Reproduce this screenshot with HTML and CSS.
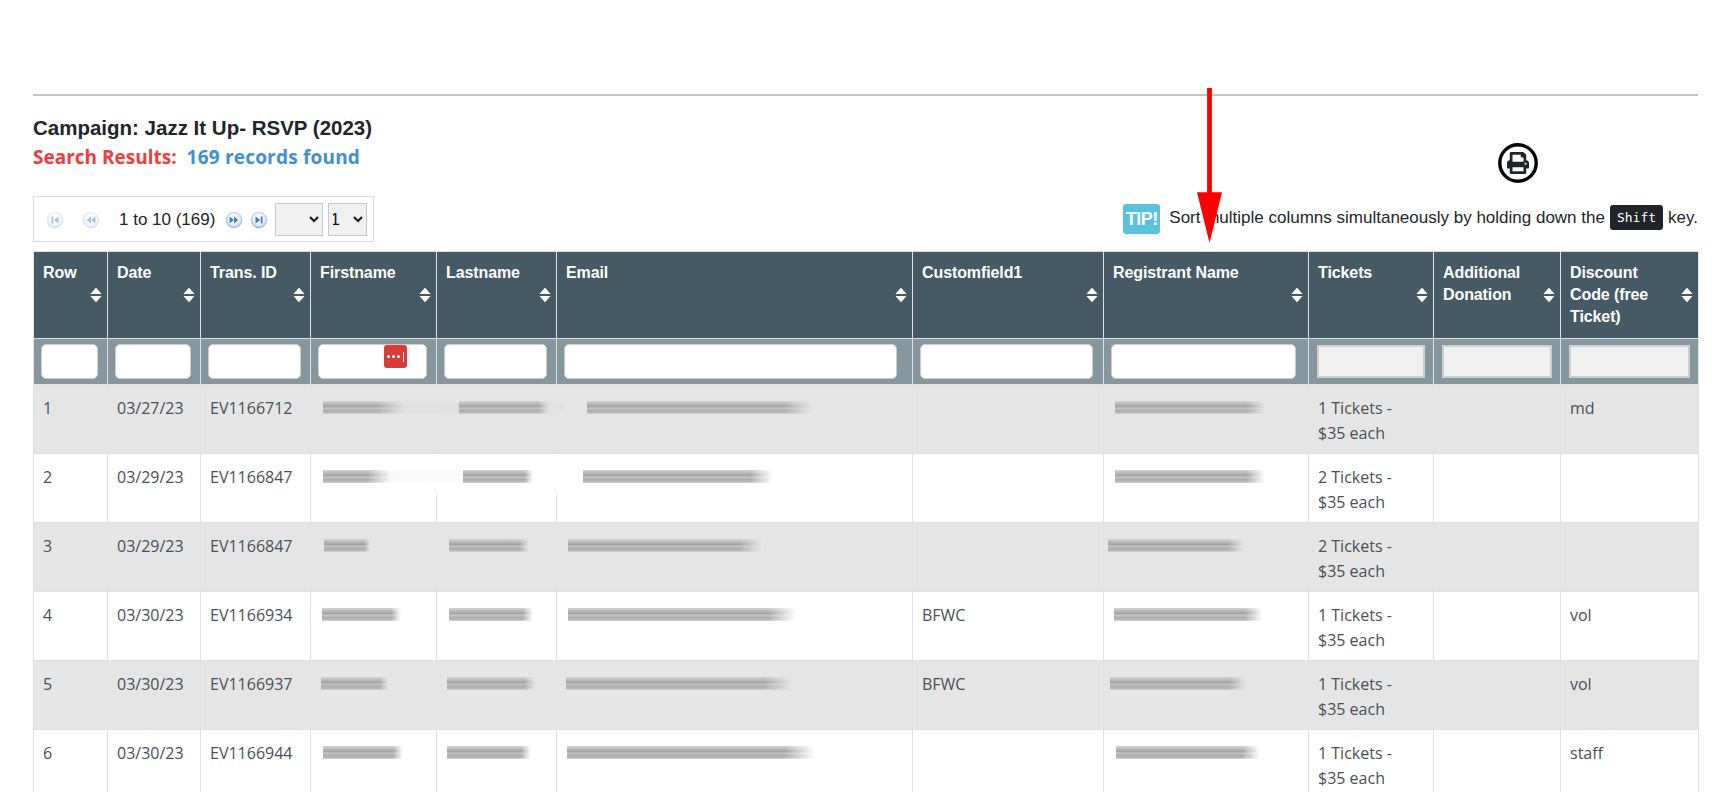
FILE: index.html
```html
<!DOCTYPE html>
<html lang="en">
<head>
<meta charset="utf-8">
<title>Campaign Search Results</title>
<link rel="stylesheet" href="styles.css">
</head>
<body>
<svg class="defs" width="0" height="0" aria-hidden="true">
  <symbol id="sort" viewBox="0 0 12 16"><path d="M6 .8 11.2 6.6a.3.3 0 0 1-.2.5H1a.3.3 0 0 1-.2-.5zM1 8.9h10a.3.3 0 0 1 .2.5L6 15.2.8 9.4A.3.3 0 0 1 1 8.9z" fill="#fff"/></symbol>
  <radialGradient id="ball" cx="50%" cy="45%" r="55%"><stop offset="55%" stop-color="#f4f7fc"/><stop offset="85%" stop-color="#b9cbe8"/><stop offset="100%" stop-color="#8ea3c6"/></radialGradient>
  <symbol id="p-first" viewBox="0 0 18 18"><circle cx="9" cy="9" r="8.3" fill="url(#ball)"/><path d="M5.5 5.5h1.7v7H5.5zM12.5 5.5v7L7.8 9z" fill="#3f7cc4"/></symbol>
  <symbol id="p-prev" viewBox="0 0 18 18"><circle cx="9" cy="9" r="8.3" fill="url(#ball)"/><path d="M9 5.5v7L4.8 9zM13.4 5.5v7L9.2 9z" fill="#3f7cc4"/></symbol>
  <symbol id="p-next" viewBox="0 0 18 18"><circle cx="9" cy="9" r="8.3" fill="url(#ball)"/><path d="M4.6 5.5v7L8.8 9zM9 5.5v7L13.2 9z" fill="#3f7cc4"/></symbol>
  <symbol id="p-last" viewBox="0 0 18 18"><circle cx="9" cy="9" r="8.3" fill="url(#ball)"/><path d="M5.5 5.5v7L10.2 9zM10.8 5.5h1.7v7h-1.7z" fill="#3f7cc4"/></symbol>
</svg>

<main class="page">
  <hr class="rule">
  <div class="top">
    <div class="top-left">
      <h1 class="campaign">Campaign: Jazz It Up- RSVP (2023)</h1>
      <p class="results"><span class="results-label">Search Results:</span><span class="results-count">169 records found</span></p>
      <div class="pager">
        <svg class="pg pg-off pg-a"><use href="#p-first"/></svg>
        <svg class="pg pg-off pg-b"><use href="#p-prev"/></svg>
        <span class="pg-text">1 to 10 (169)</span>
        <svg class="pg pg-c"><use href="#p-next"/></svg>
        <svg class="pg pg-d"><use href="#p-last"/></svg>
        <select class="sel sel-size" aria-label="Page size"><option></option></select>
        <select class="sel sel-page" aria-label="Page"><option>1</option></select>
      </div>
    </div>
    <div class="top-right">
      <svg class="print" viewBox="0 0 40 40" aria-label="Print">
        <ellipse cx="20" cy="20" rx="18.2" ry="18.2" fill="#fff" stroke="#000" stroke-width="3.4"/>
        <svg x="9" y="9" width="22" height="22" viewBox="0 0 512 512"><path fill="#212529" d="M448 192V77.25c0-8.49-3.37-16.62-9.37-22.63L393.37 9.37c-6-6-14.14-9.37-22.63-9.37H96C78.33 0 64 14.33 64 32v160c-35.35 0-64 28.65-64 64v112c0 8.84 7.16 16 16 16h48v96c0 17.67 14.33 32 32 32h320c17.67 0 32-14.33 32-32v-96h48c8.84 0 16-7.16 16-16V256c0-35.35-28.65-64-64-64zm-64 256H128v-96h256v96zm0-224H128V64h192v48c0 8.84 7.16 16 16 16h48v96zm48 72c-13.25 0-24-10.75-24-24 0-13.26 10.75-24 24-24s24 10.74 24 24c0 13.25-10.75 24-24 24z"/></svg>
      </svg>
      <div class="tip">
        <span class="tip-badge">TIP!</span>
        <span class="tip-text">Sort multiple columns simultaneously by holding down the</span>
        <kbd class="key">Shift</kbd>
        <span class="tip-text">key.</span>
      </div>
    </div>
  </div>

  <table class="grid">
    <colgroup>
      <col class="c1"><col class="c2"><col class="c3"><col class="c4"><col class="c5"><col class="c6"><col class="c7"><col class="c8"><col class="c9"><col class="c10"><col class="c11">
    </colgroup>
    <thead>
      <tr class="heads">
        <th>Row<svg class="sort"><use href="#sort"/></svg></th>
        <th>Date<svg class="sort"><use href="#sort"/></svg></th>
        <th>Trans. ID<svg class="sort"><use href="#sort"/></svg></th>
        <th>Firstname<svg class="sort"><use href="#sort"/></svg></th>
        <th>Lastname<svg class="sort"><use href="#sort"/></svg></th>
        <th>Email<svg class="sort"><use href="#sort"/></svg></th>
        <th>Customfield1<svg class="sort"><use href="#sort"/></svg></th>
        <th>Registrant Name<svg class="sort"><use href="#sort"/></svg></th>
        <th>Tickets<svg class="sort"><use href="#sort"/></svg></th>
        <th>Additional Donation<svg class="sort"><use href="#sort"/></svg></th>
        <th>Discount Code (free Ticket)<svg class="sort"><use href="#sort"/></svg></th>
      </tr>
      <tr class="filters">
        <td><input class="f" aria-label="Row"></td>
        <td><input class="f" aria-label="Date"></td>
        <td><input class="f" aria-label="Trans. ID"></td>
        <td class="has-lp"><input class="f" aria-label="Firstname"><span class="lp"><i></i><i></i><i></i><b></b></span></td>
        <td><input class="f" aria-label="Lastname"></td>
        <td><input class="f f-email" aria-label="Email"></td>
        <td><input class="f f-custom" aria-label="Customfield1"></td>
        <td><input class="f f-reg" aria-label="Registrant Name"></td>
        <td><input class="f" disabled aria-label="Tickets"></td>
        <td><input class="f" disabled aria-label="Additional Donation"></td>
        <td><input class="f" disabled aria-label="Discount Code"></td>
      </tr>
    </thead>
    <tbody>
      <tr>
        <td>1</td><td>03/27/23</td><td>EV1166712</td>
        <td class="washed"><span class="wash"></span><span class="smear long" style="margin-left:3px;width:240px"></span></td>
        <td><span class="smear" style="margin-left:13px;width:90px"></span></td>
        <td><span class="smear" style="margin-left:21px;width:224px"></span></td>
        <td></td>
        <td><span class="smear" style="margin-left:2px;width:150px"></span></td>
        <td>1 Tickets - <br>$35 each</td><td></td><td>md</td>
      </tr>
      <tr>
        <td>2</td><td>03/29/23</td><td>EV1166847</td>
        <td class="washed"><span class="wash"></span><span class="smear long" style="margin-left:3px;width:200px"></span></td>
        <td><span class="smear" style="margin-left:17px;width:70px"></span></td>
        <td><span class="smear" style="margin-left:17px;width:190px"></span></td>
        <td></td>
        <td><span class="smear" style="margin-left:2px;width:150px"></span></td>
        <td>2 Tickets - <br>$35 each</td><td></td><td></td>
      </tr>
      <tr>
        <td>3</td><td>03/29/23</td><td>EV1166847</td>
        <td><span class="smear" style="margin-left:4px;width:46px"></span></td>
        <td><span class="smear" style="margin-left:3px;width:80px"></span></td>
        <td><span class="smear" style="margin-left:2px;width:194px"></span></td>
        <td></td>
        <td><span class="smear" style="margin-left:-5px;width:136px"></span></td>
        <td>2 Tickets - <br>$35 each</td><td></td><td></td>
      </tr>
      <tr>
        <td>4</td><td>03/30/23</td><td>EV1166934</td>
        <td><span class="smear" style="margin-left:2px;width:79px"></span></td>
        <td><span class="smear" style="margin-left:3px;width:84px"></span></td>
        <td><span class="smear" style="margin-left:2px;width:228px"></span></td>
        <td>BFWC</td>
        <td><span class="smear" style="margin-left:1px;width:149px"></span></td>
        <td>1 Tickets - <br>$35 each</td><td></td><td>vol</td>
      </tr>
      <tr>
        <td>5</td><td>03/30/23</td><td>EV1166937</td>
        <td><span class="smear" style="margin-left:1px;width:67px"></span></td>
        <td><span class="smear" style="margin-left:1px;width:88px"></span></td>
        <td><span class="smear" style="margin-left:0;width:226px"></span></td>
        <td>BFWC</td>
        <td><span class="smear" style="margin-left:-3px;width:136px"></span></td>
        <td>1 Tickets - <br>$35 each</td><td></td><td>vol</td>
      </tr>
      <tr>
        <td>6</td><td>03/30/23</td><td>EV1166944</td>
        <td><span class="smear" style="margin-left:3px;width:80px"></span></td>
        <td><span class="smear" style="margin-left:1px;width:84px"></span></td>
        <td><span class="smear" style="margin-left:1px;width:248px"></span></td>
        <td></td>
        <td><span class="smear" style="margin-left:3px;width:144px"></span></td>
        <td>1 Tickets - <br>$35 each</td><td></td><td>staff</td>
      </tr>
    </tbody>
  </table>
</main>

<svg class="arrow" viewBox="0 0 26 157" preserveAspectRatio="none" aria-hidden="true"><path fill="#f00" d="M10.5 0h5v105h10.5L13 156 0 105h10.5z"/></svg>
</body>
</html>
```

FILE: styles.css
```css
* { box-sizing: border-box; }
html, body { height: 792px; margin: 0; overflow: hidden; background: #fff; }
body { font-family: "Open Sans", sans-serif; font-size: 16px; color: #495057; position: relative; }
.defs { position: absolute; }

.page { padding: 94px 37px 0 33px; }
.rule { height: 2px; margin: 0; border: 0; background: #c4c4c4; }

.top { display: flex; justify-content: space-between; align-items: flex-start; padding-top: 19px; }
.campaign { margin: 0; font: bold 20.5px/26px "Liberation Sans", Arial, sans-serif; color: #212529; }
.results { margin: 3px 0 0; font-weight: 700; font-size: 19px; line-height: 26px; }
.results-label { color: #f03c3a; margin-right: 10px; }
.results-count { color: #3f8fd2; letter-spacing: .2px; }

.pager { display: flex; align-items: center; width: 341px; height: 46px; margin-top: 26px; padding: 2px 0 0 12px; border: 1px solid #ddd; font: 17px/20px "Liberation Sans", Arial, sans-serif; color: #212529; }
.pg { width: 18px; height: 18px; flex: none; }
.pg-off { opacity: .45; }
.pg-a { margin-right: 18px; }
.pg-b { margin-right: 19px; }
.pg-c { margin: 0 7px 0 10px; }
.pg-d { margin-right: 7px; }
.pg-text { white-space: nowrap; }
.sel { height: 33px; margin-top: -2px; padding: 0; background-color: #f0f0f0; border: 1px solid #c8c8c8; border-radius: 0; font: 17px "Liberation Sans", Arial, sans-serif; color: #111; text-indent: -3px; }
.sel-size { width: 48px; margin-right: 5px; }
.sel-page { width: 39px; }

.top-right { display: flex; flex-direction: column; align-items: flex-end; padding-top: 28px; }
.print { display: block; width: 40px; height: 40px; margin-right: 160px; }
.tip { display: flex; align-items: center; height: 30px; margin-top: 21px; font: 17px/20px "Liberation Sans", Arial, sans-serif; color: #212529; white-space: nowrap; }
.tip-badge { display: block; width: 37px; height: 30px; margin-right: 9px; border-radius: 3px; background: #5bc0de; color: #fff; font: bold 18px/30px "Liberation Sans", Arial, sans-serif; text-align: center; letter-spacing: -.5px; }
.tip-text { padding-bottom: 2px; }
.key { display: block; height: 25px; margin: 0 5px 3px; padding: 0 7px; border-radius: 3px; background: #212529; color: #fff; font: 13px/25px "DejaVu Sans Mono", monospace; }

.grid { width: 1665px; margin-top: 9px; border-collapse: collapse; table-layout: fixed; }
.c1 { width: 74px; } .c2 { width: 93px; } .c3 { width: 110px; } .c4 { width: 126px; }
.c5 { width: 120px; } .c6 { width: 356px; } .c7 { width: 191px; } .c8 { width: 205px; }
.c9 { width: 125px; } .c10 { width: 127px; } .c11 { width: 138px; }

.heads th { position: relative; height: 87px; padding: 10px 22px 0 9px; border: 1px solid #dee2e6; background: #455a64; color: #fff; font: bold 16px/22px "Liberation Sans", Arial, sans-serif; letter-spacing: -.1px; text-align: left; vertical-align: top; }
.sort { position: absolute; top: 35px; right: 5px; width: 12px; height: 16px; }

.filters td { position: relative; height: 46px; padding: 0 9px 0 7px; border: 1px solid #dee2e6; background: #85969f; }
.f { display: block; width: 100%; height: 35px; padding: 0 6px; background: #fff; border: 1px solid #ccc; border-radius: 5px; }
.f-email { width: 333px; }
.f-custom { width: 173px; }
.f-reg { width: 185px; }
.f:disabled { height: 33px; margin-left: 1px; background: #f0f0f0; border: 2px solid #cfcfcf; border-radius: 0; }
.lp { position: absolute; top: 6px; right: 29px; display: flex; align-items: center; gap: 2px; width: 23px; height: 23px; padding-left: 3px; border-radius: 3px; background: #d93c38; }
.lp i { width: 3px; height: 3px; border-radius: 50%; background: #fff; }
.lp b { width: 1px; height: 10px; margin-left: 1px; background: #fff; }

tbody td { height: 69px; padding: 11px 9px 7px; border: 1px solid #dee2e6; line-height: 25px; vertical-align: top; overflow: visible; }
tbody tr:nth-child(odd) td { background: #e5e5e5; }
tbody tr:nth-child(odd) td + td { border-color: #dfe2e5; }
tbody tr:nth-child(even) td { background: #fff; }

.smear { position: relative; z-index: 2; display: block; height: 13px; margin-top: 5px; background: linear-gradient(to bottom, #d4d4d4 0, #bdbdbd 20%, #a4a4a4 42%, #c4c4c4 55%, #aeaeae 72%, #b8b8b8 88%, #d6d6d6 100%); -webkit-mask-image: linear-gradient(to right, #000 88%, transparent); mask-image: linear-gradient(to right, #000 88%, transparent); filter: blur(.6px); }
.smear.long { -webkit-mask-image: linear-gradient(to right, #000 22%, rgba(0,0,0,.08) 34%, rgba(0,0,0,.05) 100%); mask-image: linear-gradient(to right, #000 22%, rgba(0,0,0,.08) 34%, rgba(0,0,0,.05) 100%); }
.washed { position: relative; }
.wash { position: absolute; z-index: 1; top: 1px; left: 90px; width: 200px; height: 44px; -webkit-mask-image: linear-gradient(to bottom, #000 75%, transparent); mask-image: linear-gradient(to bottom, #000 75%, transparent); }
tbody tr:nth-child(odd) .wash { background: #e5e5e5; }
tbody tr:nth-child(even) .wash { background: #fff; }

.arrow { position: absolute; top: 88px; left: 1197px; width: 25px; height: 156px; }
```
